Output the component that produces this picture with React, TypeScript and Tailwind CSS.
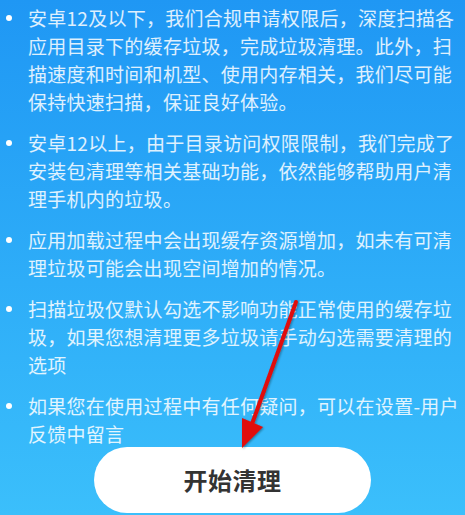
import React from "react";

const items = [
  "安卓12及以下，我们合规申请权限后，深度扫描各应用目录下的缓存垃圾，完成垃圾清理。此外，扫描速度和时间和机型、使用内存相关，我们尽可能保持快速扫描，保证良好体验。",
  "安卓12以上，由于目录访问权限限制，我们完成了安装包清理等相关基础功能，依然能够帮助用户清理手机内的垃圾。",
  "应用加载过程中会出现缓存资源增加，如未有可清理垃圾可能会出现空间增加的情况。",
  "扫描垃圾仅默认勾选不影响功能正常使用的缓存垃圾，如果您想清理更多垃圾请手动勾选需要清理的选项",
  "如果您在使用过程中有任何疑问，可以在设置-用户反馈中留言",
];

export default function App() {
  return (
    <div
      className="relative w-[465px] h-[515px] overflow-hidden bg-gradient-to-b from-[#1f97f4] to-[#3bbffb]"
      style={{ fontFamily: '"Noto Sans CJK SC", "Noto Sans", sans-serif' }}
    >
      <div className="pt-[4px] flex flex-col gap-[13px]">
        {items.map((t, i) => (
          <div key={i} className="flex">
            <div className="w-[28px] shrink-0 flex justify-start pl-[6px] pt-[11px]">
              <span className="block w-[6px] h-[6px] rounded-full bg-white" />
            </div>
            <p className="w-[434px] text-[19px] leading-[28px] tracking-[0.27px] text-white/85">
              {t}
            </p>
          </div>
        ))}
      </div>

      <button className="mx-auto mt-[-1px] flex items-center justify-center w-[277px] h-[66px] rounded-full bg-white text-[24px] font-bold tracking-[0.5px] text-[#333333]">
        开始清理
      </button>

      {/* red annotation arrow */}
      <svg className="absolute left-0 top-0 pointer-events-none" width="465" height="515">
        <defs>
          <filter id="sh" x="-20%" y="-20%" width="140%" height="140%">
            <feDropShadow dx="1" dy="1" stdDeviation="1" floodColor="#000" floodOpacity="0.35" />
          </filter>
        </defs>
        <g filter="url(#sh)">
          <line x1="296" y1="302" x2="252" y2="424" stroke="#e00d0d" strokeWidth="4" strokeLinecap="round" />
          <polygon points="242,448 242,418 263,427" fill="#e00d0d" />
        </g>
      </svg>
    </div>
  );
}
